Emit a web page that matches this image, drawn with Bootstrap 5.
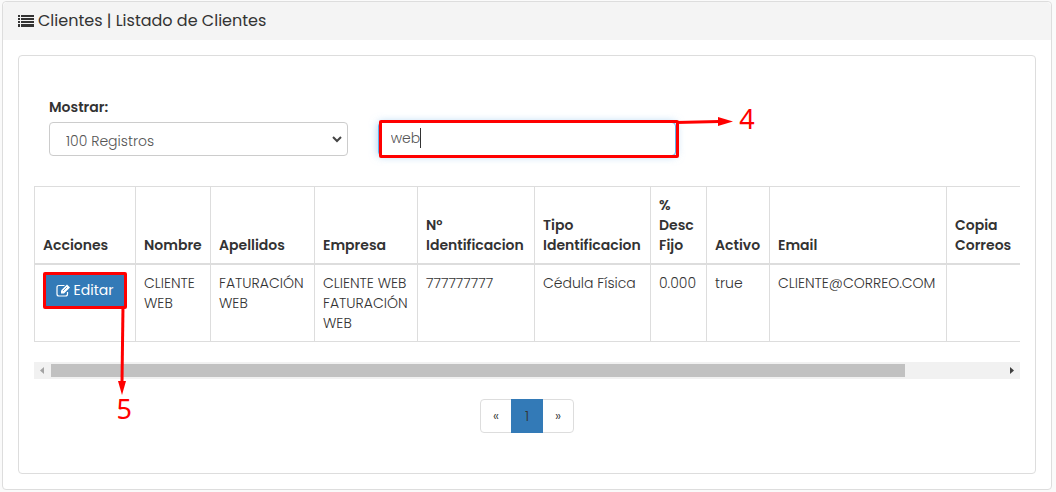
<!DOCTYPE html>
<html lang="es">
<head>
<meta charset="utf-8">
<meta name="viewport" content="width=device-width, initial-scale=1">
<title>Clientes</title>
<link href="https://cdn.jsdelivr.net/npm/bootstrap@5.3.0/dist/css/bootstrap.min.css" rel="stylesheet">
<style>
body{background:#fafafa;font-family:Poppins,Inter,"Liberation Sans",sans-serif;font-size:14px;line-height:20px;font-weight:300;color:#333}
.panel-main{margin:1px 4px 2px 2px;border-color:#ddd;border-radius:4px}
.panel-main>.card-header{height:38px;padding:0 15px;background:#f4f4f4;border:0}
.panel-main h1{font-size:16px;line-height:20px;font-weight:400;margin:0}
.panel-main>.card-body{padding:15px}
.panel-list{border-color:#ddd;border-radius:4px;padding:41px 15px 40px}
.filters{padding-bottom:30px;--bs-gutter-x:30px;margin:0}
.filters label{font-weight:600;margin-bottom:5px}
.filters .form-control,.filters .form-select{height:34px;font-size:14px;line-height:20px;font-weight:300;color:#555;border-color:#ccc;border-radius:4px;padding:6px 12px}
.filters .form-select{padding:8px 16px 4px;background-position:right 5px center;background-size:10px 10px;background-image:url("data:image/svg+xml,%3Csvg xmlns='http://www.w3.org/2000/svg' viewBox='0 0 10 10'%3E%3Cpath d='M1 3l4 4 4-4' fill='none' stroke='%23444' stroke-width='2'/%3E%3C/svg%3E")}
.filters .form-control{border-color:#66afe9;box-shadow:0 0 8px rgba(102,175,233,.6);padding:5px 12px 7px}
.caret{position:absolute;left:42px;top:6px;width:1px;height:20px;background:#333}
.note{position:absolute;border:3px solid #f00;border-radius:2px;pointer-events:none}
.note-search{left:1px;right:-3px;top:-2px;bottom:-2px}
.note-edit{inset:-1px -1px -2px 0}
.note svg{position:absolute;overflow:visible}
.note b{position:absolute;font:400 27px/28px "Noto Sans","Open Sans",sans-serif;color:#f00}
.note-search svg{left:100%;top:-3px}
.note-search b{left:calc(100% + 63px);top:-18px}
.note-edit svg{right:-3px;top:100%}
.note-edit b{right:-8px;top:calc(100% + 89px)}
.clients{table-layout:fixed;margin:0;color:#333;border-color:#ddd}
.clients>:not(caption)>*>*{padding:8px;border-color:#ddd;border-width:1px 0 1px 1px}
.clients>:not(caption)>*{border-width:0}
.clients thead th{font-weight:600;vertical-align:bottom;border-bottom-width:2px}
.c-act{width:101px}.c-name{width:75px}.c-last{width:104px}.c-comp{width:103px}.c-id{width:117px}.c-type{width:116px}.c-desc{width:56px}.c-on{width:63px}.c-mail{width:177px}
.btn-edit{--bs-btn-color:#fff;--bs-btn-bg:#337ab7;--bs-btn-border-color:#2e6da4;--bs-btn-hover-color:#fff;--bs-btn-hover-bg:#286090;font-size:14px;line-height:20px;font-weight:400;width:83px;height:34px;padding:0;border-radius:4px}
.scroller{height:17px;margin:20px 0;background:#f1f1f1}
.scroller .arrow{width:17px;height:17px;flex:none}
.scroller .track{padding:2px 0}
.scroller .thumb{height:13px;background:#c1c1c1}
.pagination{--bs-pagination-color:#333;--bs-pagination-border-color:#ddd;--bs-pagination-active-bg:#337ab7;--bs-pagination-active-color:#333;--bs-pagination-active-border-color:#337ab7;--bs-pagination-font-size:14px;--bs-pagination-border-radius:4px;margin:0}
.page-link{line-height:20px;width:32px;text-align:center;padding:6px 0}
</style>
</head>
<body>
<main class="card panel-main">
  <div class="card-header d-flex align-items-center">
    <h1 class="d-flex align-items-center gap-1">
      <svg width="16" height="14" viewBox="0 0 16 14" fill="#333" aria-hidden="true"><path d="M0 1h2v2H0zM3 1h13v2H3zM0 4h2v2H0zM3 4h13v2H3zM0 7h2v2H0zM3 7h13v2H3zM0 10h2v3H0zM3 10h13v3H3z"/></svg>
      Clientes | Listado de Clientes</h1>
  </div>
  <div class="card-body">
    <section class="card panel-list">
      <div class="row filters align-items-end">
        <div class="col-4">
          <label class="d-block" for="show">Mostrar:</label>
          <select class="form-select" id="show"><option>100 Registros</option></select>
        </div>
        <div class="col-4">
          <div class="position-relative">
            <input class="form-control" type="text" value="web" aria-label="Buscar">
            <span class="caret"></span>
            <div class="note note-search">
              <svg width="57" height="8" viewBox="0 0 57 8"><path d="M0 2.500L43 1.500" stroke="#f00" stroke-width="3"/><path d="M42 -3l15 4.500-15 4.500z" fill="#f00"/></svg>
              <b>4</b>
            </div>
          </div>
        </div>
      </div>
      <table class="table clients">
        <colgroup><col class="c-act"><col class="c-name"><col class="c-last"><col class="c-comp"><col class="c-id"><col class="c-type"><col class="c-desc"><col class="c-on"><col class="c-mail"><col></colgroup>
        <thead><tr><th>Acciones</th><th>Nombre</th><th>Apellidos</th><th>Empresa</th><th>N° Identificacion</th><th>Tipo Identificacion</th><th>% Desc<br>Fijo</th><th>Activo</th><th>Email</th><th>Copia Correos</th></tr></thead>
        <tbody><tr>
          <td><div class="position-relative d-inline-block">
            <button type="button" class="btn btn-edit d-flex align-items-center justify-content-center gap-1"><svg width="14" height="13" viewBox="0 0 14 13" fill="none" stroke="#fff" stroke-width="1.2" aria-hidden="true"><path d="M8.500 1.500H3Q1 1.500 1 3.500V10q0 2 2 2h6.500q2 0 2-2V8"/><path d="M5 9.500V6.500L11 .5 14 3.500 8 9.500z" fill="#fff" stroke="none"/><path d="M7 7l4-4" stroke="#337ab7" stroke-width=".7"/></svg>Editar</button>
            <div class="note note-edit">
              <svg width="10" height="90" viewBox="0 0 10 90"><path d="M6 0L5 76" stroke="#f00" stroke-width="3"/><path d="M1 75h8l-4 14z" fill="#f00"/></svg>
              <b>5</b>
            </div></div></td>
          <td>CLIENTE WEB</td><td>FATURACIÓN WEB</td><td>CLIENTE WEB FATURACIÓN WEB</td><td>777777777</td><td>Cédula Física</td><td>0.000</td><td>true</td><td>CLIENTE@CORREO.COM</td><td></td>
        </tr></tbody>
      </table>
      <div class="scroller d-flex" aria-hidden="true">
        <svg class="arrow" viewBox="0 0 17 17"><path d="M10 5v7L6 8.500z" fill="#a3a3a3"/></svg>
        <div class="track flex-grow-1"><div class="thumb" style="width:89.700%"></div></div>
        <svg class="arrow" viewBox="0 0 17 17"><path d="M7 5v7l4-3.500z" fill="#404040"/></svg>
      </div>
      <nav aria-label="Páginas"><ul class="pagination justify-content-center">
        <li class="page-item"><a class="page-link" href="#">«</a></li>
        <li class="page-item active"><a class="page-link" href="#">1</a></li>
        <li class="page-item"><a class="page-link" href="#">»</a></li>
      </ul></nav>
    </section>
  </div>
</main>
<script src="https://cdn.jsdelivr.net/npm/bootstrap@5.3.0/dist/js/bootstrap.bundle.min.js"></script>
</body>
</html>
